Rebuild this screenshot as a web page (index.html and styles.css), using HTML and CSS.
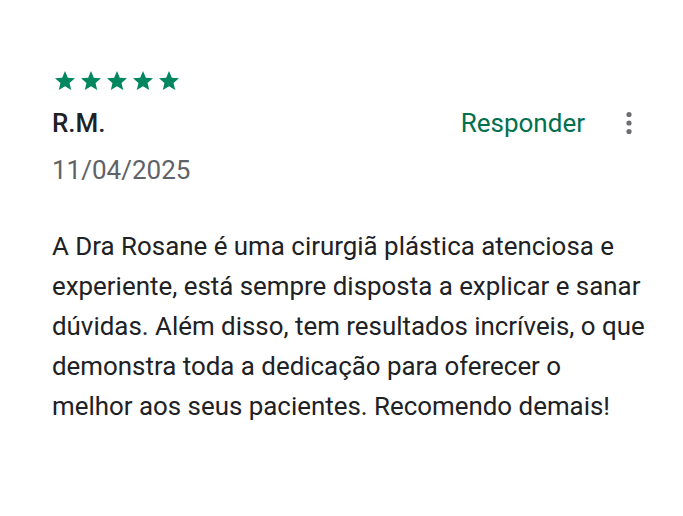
FILE: index.html
```html
<!DOCTYPE html>
<html lang="pt-BR">
<head>
  <meta charset="UTF-8" />
  <title>Avaliação</title>
  <link rel="stylesheet" href="styles.css">
</head>
<body>
  <!-- Review card -->
  <div class="review">
    <div class="stars">
      <svg viewBox="0 0 24 24"><path d="M12 17.27L18.18 21l-1.64-7.03L22 9.24l-7.19-.61L12 2 9.19 8.63 2 9.24l5.46 4.73L5.82 21z"/></svg>
      <svg viewBox="0 0 24 24"><path d="M12 17.27L18.18 21l-1.64-7.03L22 9.24l-7.19-.61L12 2 9.19 8.63 2 9.24l5.46 4.73L5.82 21z"/></svg>
      <svg viewBox="0 0 24 24"><path d="M12 17.27L18.18 21l-1.64-7.03L22 9.24l-7.19-.61L12 2 9.19 8.63 2 9.24l5.46 4.73L5.82 21z"/></svg>
      <svg viewBox="0 0 24 24"><path d="M12 17.27L18.18 21l-1.64-7.03L22 9.24l-7.19-.61L12 2 9.19 8.63 2 9.24l5.46 4.73L5.82 21z"/></svg>
      <svg viewBox="0 0 24 24"><path d="M12 17.27L18.18 21l-1.64-7.03L22 9.24l-7.19-.61L12 2 9.19 8.63 2 9.24l5.46 4.73L5.82 21z"/></svg>
    </div>

    <div class="head-row">
      <div class="author">R.M.</div>
      <div class="actions">
        <span class="reply">Responder</span>
        <span class="more">
          <svg viewBox="0 0 8 24"><circle cx="4" cy="3.5" r="2.6"/><circle cx="4" cy="12" r="2.6"/><circle cx="4" cy="20.5" r="2.6"/></svg>
        </span>
      </div>
    </div>

    <div class="date">11/04/2025</div>

    <!-- line breaks kept as in the app's wrapping -->
    <p class="text">A Dra Rosane é uma cirurgiã plástica atenciosa e<br>
      experiente, está sempre disposta a explicar e sanar<br>
      dúvidas. Além disso, tem resultados incríveis, o que<br>
      demonstra toda a dedicação para oferecer o<br>
      melhor aos seus pacientes. Recomendo demais!</p>
  </div>
</body>
</html>
```

FILE: styles.css
```css
* { box-sizing: border-box; }
body {
  margin: 0;
  background: #fff;
  font-family: Roboto, "Noto Sans", sans-serif;
  color: #202124;
}

/* Review card */
.review {
  padding: 69px 50px 0 52px;
}

.stars {
  display: flex;
  gap: 2px;
  margin-left: 1px;
}

.stars svg {
  width: 24px;
  height: 24px;
  fill: #01875f;
}

.head-row {
  display: flex;
  align-items: center;
  justify-content: space-between;
  margin-top: 12px;
  height: 36px;
}

.author {
  font-size: 26px;
  font-weight: 500;
  color: #202124;
}

.actions {
  display: flex;
  align-items: center;
}

.reply {
  font-size: 26px;
  color: #01704f;
  margin-right: 40px;
}

.more svg {
  width: 8px;
  height: 24px;
  fill: #6b6f74;
  display: block;
}

.date {
  margin-top: 14px;
  font-size: 26px;
  color: #5f6368;
  line-height: 30px;
}

.text {
  margin: 41px 0 0;
  font-size: 25.9px;
  line-height: 40px;
  color: #202124;
  white-space: nowrap;
}
```
